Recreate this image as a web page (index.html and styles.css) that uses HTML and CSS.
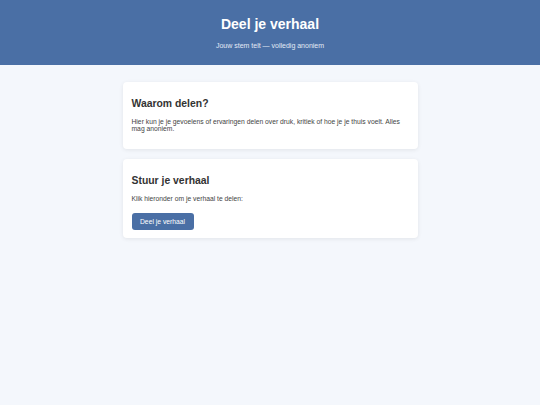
FILE: index.html
```html
<!DOCTYPE html>
<html lang="nl">
<head>
<meta charset="utf-8">
<title>Deel je verhaal</title>
<link rel="stylesheet" href="styles.css">
</head>
<body>
<header class="hero">
  <h1 class="hero-title">Deel je verhaal</h1>
  <p class="hero-sub">Jouw stem telt — volledig anoniem</p>
</header>
<main class="content">
  <section class="card">
    <h2 class="card-title">Waarom delen?</h2>
    <p class="card-text">Hier kun je je gevoelens of ervaringen delen over druk, kritiek of hoe je je thuis voelt. Alles mag anoniem.</p>
  </section>
  <section class="card">
    <h2 class="card-title">Stuur je verhaal</h2>
    <p class="card-text">Klik hieronder om je verhaal te delen:</p>
    <a class="btn" href="#">Deel je verhaal</a>
  </section>
</main>
</body>
</html>
```
FILE: styles.css
```css
* { box-sizing: border-box; }
html, body { margin: 0; padding: 0; }
body {
  background: #f4f7fc;
  font-family: "Liberation Sans", Arial, sans-serif;
  color: #333;
  width: 540px;
  height: 405px;
}
.hero {
  background: #4a6fa5;
  color: #fff;
  height: 65px;
  padding-top: 17px;
  text-align: center;
}
.hero-title {
  margin: 0;
  font-size: 14px;
  line-height: 15.6px;
  font-weight: bold;
}
.hero-sub {
  margin: 9px 0 0;
  font-size: 7px;
  line-height: 8px;
  color: #e3eaf5;
}
.content {
  width: 295px;
  margin: 17px auto 0;
  display: flex;
  flex-direction: column;
  gap: 10px;
}
.card {
  background: #fff;
  border-radius: 4px;
  box-shadow: 0 1px 4px rgba(0, 0, 0, 0.08);
  padding: 15px 9px 8px;
}
.card-title {
  margin: 0 0 7px;
  font-size: 10.4px;
  line-height: 14px;
  font-weight: bold;
  color: #333;
}
.card-text {
  margin: 0 0 8px;
  font-size: 6.75px;
  line-height: 7.3px;
  color: #444;
}
.btn {
  display: inline-block;
  margin-top: 2px;
  background: #4a6fa5;
  color: #fff;
  text-decoration: none;
  font-size: 6.75px;
  line-height: 7.5px;
  padding: 5px 8.5px;
  border-radius: 3px;
}
```
